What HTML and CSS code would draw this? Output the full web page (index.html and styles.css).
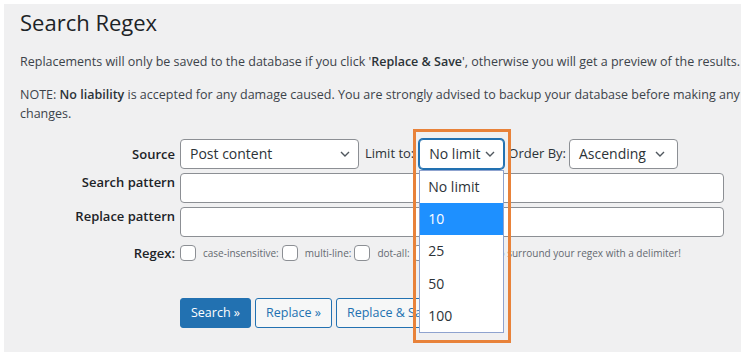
FILE: index.html
```html
<!DOCTYPE html>
<html lang="en">
<head>
<meta charset="utf-8">
<title>Search Regex</title>
<link rel="stylesheet" href="styles.css">
</head>
<body>
<div class="wrap">
  <h1 class="title">Search Regex</h1>
  <p class="note">Replacements will only be saved to the database if you click '<b>Replace &amp; Save</b>', otherwise you will get a preview of the results.</p>
  <p class="note">NOTE: <b>No liability</b> is accepted for any damage caused. You are strongly advised to backup your database before making any<br>changes.</p>

  <div class="form">
    <div class="label center">Source</div>
    <div class="field row-inline">
      <div class="select src">
        <span>Post content</span>
        <svg class="chev" viewBox="0 0 10 6" width="10" height="6"><path d="M1 1l4 4 4-4" fill="none" stroke="#50575e" stroke-width="1.4"/></svg>
      </div>
      <span class="inline-label">Limit to:</span>
      <div class="limit-wrap">
        <div class="select limit focused">
          <span>No limit</span>
          <svg class="chev" viewBox="0 0 10 6" width="10" height="6"><path d="M1 1l4 4 4-4" fill="none" stroke="#50575e" stroke-width="1.4"/></svg>
        </div>
        <ul class="options">
          <li>No limit</li>
          <li class="active">10</li>
          <li>25</li>
          <li>50</li>
          <li>100</li>
        </ul>
        <div class="highlight"></div>
      </div>
      <span class="inline-label order-label">Order By:</span>
      <div class="select order">
        <span>Ascending</span>
        <svg class="chev" viewBox="0 0 10 6" width="10" height="6"><path d="M1 1l4 4 4-4" fill="none" stroke="#50575e" stroke-width="1.4"/></svg>
      </div>
    </div>

    <div class="label top">Search pattern</div>
    <div class="field"><div class="input"></div></div>

    <div class="label top">Replace pattern</div>
    <div class="field"><div class="input"></div></div>

    <div class="label center regex-label">Regex:</div>
    <div class="field flags">
      <span class="cb"></span><span class="flag">case-insensitive:</span>
      <span class="cb"></span><span class="flag">multi-line:</span>
      <span class="cb"></span><span class="flag">dot-all:</span>
      <span class="cb"></span><span class="flag hint">Don't forget to surround your regex with a delimiter!</span>
    </div>

    <div class="label"></div>
    <div class="field buttons">
      <span class="btn primary">Search »</span>
      <span class="btn secondary">Replace »</span>
      <span class="btn secondary">Replace &amp; Save »</span>
    </div>
  </div>
</div>
</body>
</html>
```

FILE: styles.css
```css
* { box-sizing: border-box; }
html, body { margin: 0; padding: 0; background: #ffffff; }
body {
  font-family: "Open Sans", "Noto Sans", "Liberation Sans", sans-serif;
  color: #3c434a;
  font-size: 13px;
}
.wrap {
  margin: 4px 8px 6px 4px;
  height: 348px;
  background: #f0f0f1;
  padding: 3px 0 0 16px;
  overflow: hidden;
}
.title {
  margin: 0;
  font-size: 22px;
  font-weight: 400;
  line-height: 30px;
  color: #1d2327;
}
.note {
  margin: 15px 0 0;
  line-height: 19.5px;
  font-size: 12.5px;
  white-space: nowrap;
}
.note + .note { margin-top: 13px; }
.note b { font-weight: 600; color: #2c3338; }

.form {
  margin-top: 15px;
  display: grid;
  grid-template-columns: 155px 1fr;
  column-gap: 5px;
  row-gap: 4px;
}
.label {
  text-align: right;
  font-weight: 600;
  color: #1d2327;
  font-size: 13px;
}
.label.center { align-self: center; }
.label.top { line-height: 18px; padding-top: 0; }
.row-inline {
  display: flex;
  align-items: center;
}
.select {
  height: 30px;
  border: 1px solid #8c8f94;
  border-radius: 4px;
  background: #fff;
  display: flex;
  align-items: center;
  justify-content: space-between;
  padding: 0 8px 0 9px;
  font-size: 14px;
  color: #2c3338;
}
.select.src { width: 179px; }
.select.limit { width: 85px; padding-right: 8px; }
.select.order { width: 109px; padding-left: 9px; padding-right: 12px; }
.select.focused {
  border-color: #2271b1;
  box-shadow: 0 0 0 1px #2271b1;
}
.inline-label {
  padding: 0 5px 0 6px;
  margin-top: -2px;
  font-size: 13px;
  color: #2c3338;
}
.inline-label.order-label { padding: 0 3px 0 4px; }
.limit-wrap { position: relative; }
.options {
  position: absolute;
  left: 0;
  top: 31px;
  width: 85px;
  margin: 0;
  padding: 0;
  list-style: none;
  background: #fff;
  border: 1px solid #8fa3cf;
  z-index: 5;
}
.options li {
  height: 32.4px;
  line-height: 32px;
  padding-left: 8px;
  font-size: 14px;
  color: #2c3338;
}
.options li.active { background: #1e90ff; color: #fff; }
.highlight {
  position: absolute;
  left: -6px;
  top: -10px;
  width: 98px;
  height: 214px;
  border: 3px solid #e8823a;
  z-index: 6;
}
.field.row-inline { height: 30px; }
.input {
  width: 544px;
  height: 30px;
  border: 1px solid #8c8f94;
  border-radius: 4px;
  background: #fff;
}
.regex-label { margin-top: 3px; }
.flags {
  display: flex;
  align-items: center;
  margin-top: 4px;
  height: 16px;
  white-space: nowrap;
}
.cb {
  width: 16px;
  height: 16px;
  border: 1px solid #8c8f94;
  border-radius: 4px;
  background: #fff;
  flex: none;
}
.flag {
  font-size: 10px;
  color: #646970;
  margin: 0 3px 0 7px;
}
.flag.hint { margin-left: 8px; }
.buttons {
  margin-top: 32px;
  display: flex;
  gap: 4px;
}
.btn {
  height: 30px;
  line-height: 28px;
  padding: 0 10px;
  border-radius: 3px;
  font-size: 12.5px;
  border: 1px solid #2271b1;
  white-space: nowrap;
}
.btn.primary { background: #2271b1; color: #fff; }
.btn.secondary { background: #f6f7f7; color: #2271b1; }
```
